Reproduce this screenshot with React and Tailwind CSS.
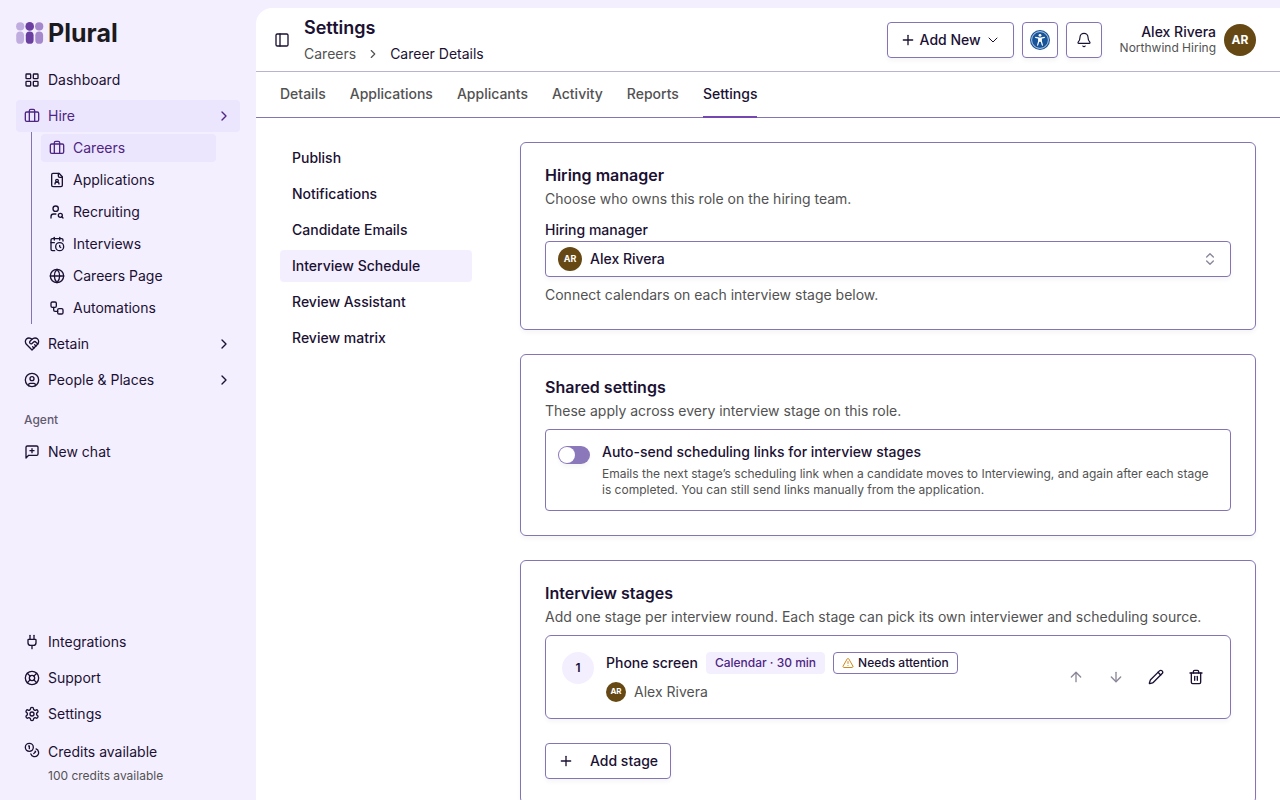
import { useState } from 'react';
import {
  ArrowDown,
  ArrowUp,
  Bell,
  Briefcase,
  CalendarClock,
  ChevronDown,
  ChevronRight,
  ChevronsUpDown,
  CircleUser,
  Coins,
  Globe,
  LayoutGrid,
  LifeBuoy,
  PanelLeft,
  Pencil,
  Plug,
  Plus,
  Trash2,
  TriangleAlert,
  UserSearch,
  Workflow,
} from 'lucide-react';

function StrokeIcon({ size = 16, children }) {
  return (
    <svg
      width={size}
      height={size}
      viewBox="0 0 24 24"
      fill="none"
      stroke="currentColor"
      strokeWidth="2"
      strokeLinecap="round"
      strokeLinejoin="round"
      aria-hidden="true"
    >
      {children}
    </svg>
  );
}

function FileUserIcon({ size }) {
  return (
    <StrokeIcon size={size}>
      <path d="M14 2v4a2 2 0 0 0 2 2h4" />
      <path d="M15 18a3 3 0 1 0-6 0" />
      <path d="M15 2H6a2 2 0 0 0-2 2v16a2 2 0 0 0 2 2h12a2 2 0 0 0 2-2V7z" />
      <circle cx="12" cy="13" r="2" />
    </StrokeIcon>
  );
}

function HeartHandshakeIcon({ size }) {
  return (
    <StrokeIcon size={size}>
      <path d="M19 14c1.49-1.46 3-3.21 3-5.5A5.5 5.5 0 0 0 16.5 3c-1.76 0-3 .5-4.5 2-1.5-1.5-2.74-2-4.5-2A5.5 5.5 0 0 0 2 8.5c0 2.3 1.5 4.05 3 5.5l7 7Z" />
      <path d="M12 5 9.04 7.96a2.17 2.17 0 0 0 0 3.08c.82.82 2.13.85 3 .07l2.07-1.9a2.82 2.82 0 0 1 3.79 0l2.96 2.66" />
      <path d="m18 15-2-2" />
      <path d="m15 18-2-2" />
    </StrokeIcon>
  );
}

function NewChatIcon({ size }) {
  return (
    <StrokeIcon size={size}>
      <path d="M21 15a2 2 0 0 1-2 2H7l-4 4V5a2 2 0 0 1 2-2h14a2 2 0 0 1 2 2z" />
      <path d="M12 7v6" />
      <path d="M9 10h6" />
    </StrokeIcon>
  );
}

function GearIcon({ size }) {
  return (
    <StrokeIcon size={size}>
      <path d="M12.22 2h-.44a2 2 0 0 0-2 2v.18a2 2 0 0 1-1 1.73l-.43.25a2 2 0 0 1-2 0l-.15-.08a2 2 0 0 0-2.73.73l-.22.38a2 2 0 0 0 .73 2.73l.15.1a2 2 0 0 1 1 1.72v.51a2 2 0 0 1-1 1.74l-.15.09a2 2 0 0 0-.73 2.73l.22.38a2 2 0 0 0 2.73.73l.15-.08a2 2 0 0 1 2 0l.43.25a2 2 0 0 1 1 1.73V20a2 2 0 0 0 2 2h.44a2 2 0 0 0 2-2v-.18a2 2 0 0 1 1-1.73l.43-.25a2 2 0 0 1 2 0l.15.08a2 2 0 0 0 2.73-.73l.22-.39a2 2 0 0 0-.73-2.73l-.15-.08a2 2 0 0 1-1-1.74v-.5a2 2 0 0 1 1-1.74l.15-.09a2 2 0 0 0 .73-2.73l-.22-.38a2 2 0 0 0-2.73-.73l-.15.08a2 2 0 0 1-2 0l-.43-.25a2 2 0 0 1-1-1.73V4a2 2 0 0 0-2-2z" />
      <circle cx="12" cy="12" r="3" />
    </StrokeIcon>
  );
}

const hireLinks = [
  { label: 'Careers', icon: Briefcase, active: true },
  { label: 'Applications', icon: FileUserIcon },
  { label: 'Recruiting', icon: UserSearch },
  { label: 'Interviews', icon: CalendarClock },
  { label: 'Careers Page', icon: Globe },
  { label: 'Automations', icon: Workflow },
];

const tabs = ['Details', 'Applications', 'Applicants', 'Activity', 'Reports', 'Settings'];

const sections = [
  'Publish',
  'Notifications',
  'Candidate Emails',
  'Interview Schedule',
  'Review Assistant',
  'Review matrix',
];

function Logo() {
  return (
    <a href="#" className="flex h-[34px] items-center gap-1 text-[#1c1a1f]">
      <svg width="28" height="22" viewBox="0 0 28 22" aria-hidden="true">
        <g fill="#c0addf">
          <circle cx="4.2" cy="4.4" r="4.1" />
          <rect x="0.2" y="9.4" width="7.8" height="12.4" rx="3.9" />
        </g>
        <g fill="#6b3fa0">
          <circle cx="13.7" cy="4.4" r="4.3" />
          <rect x="9.8" y="9.4" width="7.8" height="12.4" rx="3.9" />
        </g>
        <g fill="#a488cb">
          <circle cx="23.2" cy="4.4" r="4.1" />
          <rect x="19.3" y="9.4" width="7.8" height="12.4" rx="3.9" />
        </g>
      </svg>
      <span className="text-[25px] leading-8 font-bold">Plural</span>
    </a>
  );
}

function NavItem({ icon: Icon, label, active, expandable }) {
  return (
    <a
      href="#"
      className={`flex h-8 items-center gap-2 rounded-sm px-2 text-sm ${active ? 'bg-[#ebe5fd] text-[#4f2683]' : ''}`}
    >
      <Icon size={16} />
      <span className="flex-1">{label}</span>
      {expandable && <ChevronRight size={16} />}
    </a>
  );
}

function Sidebar() {
  return (
    <aside className="flex w-64 shrink-0 flex-col p-4">
      <Logo />
      <nav className="mt-3.5 flex flex-col gap-1">
        <NavItem icon={LayoutGrid} label="Dashboard" />
        <div>
          <NavItem icon={Briefcase} label="Hire" active expandable />
          <ul className="mr-6 ml-[15px] border-l border-[#8574b4] pl-[9px]">
            {hireLinks.map(({ label, icon: Icon, active }) => (
              <li key={label} className="py-0.5">
                <a
                  href="#"
                  className={`flex h-7 items-center gap-2 rounded-sm px-2 text-sm ${active ? 'bg-[#ebe5fd] text-[#4f2683]' : ''}`}
                >
                  <Icon size={16} />
                  {label}
                </a>
              </li>
            ))}
          </ul>
        </div>
        <NavItem icon={HeartHandshakeIcon} label="Retain" expandable />
        <NavItem icon={CircleUser} label="People & Places" expandable />
      </nav>
      <p className="mt-2 px-2 text-xs leading-8 font-medium text-[#5f5a6e]">Agent</p>
      <NavItem icon={NewChatIcon} label="New chat" />

      <div className="mt-auto flex flex-col gap-1">
        <NavItem icon={Plug} label="Integrations" />
        <NavItem icon={LifeBuoy} label="Support" />
        <NavItem icon={GearIcon} label="Settings" />
        <a href="#" className="flex gap-2 px-2 pt-2">
          <Coins size={16} />
          <span className="flex flex-col gap-1.5">
            <span className="text-sm">Credits available</span>
            <span className="text-xs text-[#525252]">100 credits available</span>
          </span>
        </a>
      </div>
    </aside>
  );
}

function AccessibilityIcon() {
  return (
    <svg width="20" height="20" viewBox="0 0 20 20" aria-hidden="true">
      <circle cx="10" cy="10" r="10" fill="#17549a" />
      <circle cx="10" cy="10" r="8.4" fill="none" stroke="#fff" strokeWidth="0.7" />
      <circle cx="10" cy="5.3" r="1.4" fill="#fff" />
      <path
        d="M5.6 7.4 L8.8 8.2 V11 L7.6 15.2 M14.4 7.4 L11.2 8.2 V11 L12.4 15.2"
        fill="none"
        stroke="#fff"
        strokeWidth="1.2"
        strokeLinecap="round"
        strokeLinejoin="round"
      />
      <path d="M8.4 7.6h3.2v4.2H8.4z" fill="#fff" />
    </svg>
  );
}

function Header() {
  return (
    <header className="flex h-16 shrink-0 items-center border-b border-[#b9b3cf] pr-6 pl-4">
      <button type="button" aria-label="Toggle sidebar" className="py-1 pr-1 pl-0.5">
        <PanelLeft size={16} />
      </button>
      <div className="ml-2.5 flex flex-1 flex-col gap-1">
        <h1 className="text-lg leading-6 font-semibold">Settings</h1>
        <nav aria-label="Breadcrumb" className="flex items-center gap-2.5 text-sm">
          <a href="#" className="text-[#525252]">Careers</a>
          <ChevronRight size={14} className="text-[#525252]" />
          <span>Career Details</span>
        </nav>
      </div>
      <div className="flex items-center gap-2">
        <button
          type="button"
          className="flex h-9 items-center gap-1 rounded-sm border border-[#8574b4] px-3 text-sm font-medium shadow-[0_3px_4px_rgba(0,0,0,0.04)]"
        >
          <Plus size={16} />
          Add New
          <ChevronDown size={16} strokeWidth={1.5} />
        </button>
        <button
          type="button"
          aria-label="Accessibility"
          className="flex size-9 items-center justify-center rounded-sm border border-[#8574b4] shadow-[0_3px_4px_rgba(0,0,0,0.04)]"
        >
          <AccessibilityIcon />
        </button>
        <button
          type="button"
          aria-label="Notifications"
          className="flex size-9 items-center justify-center rounded-sm border border-[#8574b4] shadow-[0_3px_4px_rgba(0,0,0,0.04)]"
        >
          <Bell size={16} strokeWidth={1.75} />
        </button>
        <div className="ml-2.5 text-right">
          <p className="text-sm leading-4 font-medium">Alex Rivera</p>
          <p className="text-xs leading-4 text-[#525252]">Northwind Hiring</p>
        </div>
        <Avatar className="size-8 text-xs" />
      </div>
    </header>
  );
}

function Avatar({ className }) {
  return (
    <span
      className={`flex shrink-0 items-center justify-center rounded-full bg-[#664814] font-bold text-white ${className}`}
    >
      AR
    </span>
  );
}

function Card({ title, description, children }) {
  return (
    <section className="rounded-md border border-[#8574b4] p-6 shadow-[0_3px_4px_rgba(0,0,0,0.04)]">
      <h2 className="text-base leading-4 font-semibold">{title}</h2>
      <p className="mt-1.5 text-sm text-[#525252]">{description}</p>
      {children}
    </section>
  );
}

function IconButton({ icon: Icon, label, disabled }) {
  return (
    <button
      type="button"
      aria-label={label}
      disabled={disabled}
      className="flex size-9 items-center justify-center disabled:opacity-50"
    >
      <Icon size={16} />
    </button>
  );
}

function App() {
  const [autoSend, setAutoSend] = useState(false);

  return (
    <div className="flex h-screen overflow-hidden bg-[#f4efff] font-[Inter,sans-serif] text-[#1b1133]">
      <Sidebar />
      <div className="mt-2 flex min-w-0 flex-1 flex-col rounded-tl-2xl bg-white">
        <Header />
        <nav className="flex shrink-0 gap-6 border-b border-[#8574b4] px-6 text-sm font-medium">
          {tabs.map((tab) => (
            <a
              key={tab}
              href="#"
              className={`-mb-px border-b-2 py-3 ${tab === 'Settings' ? 'border-[#7448b0]' : 'border-transparent text-[#525252]'}`}
            >
              {tab}
            </a>
          ))}
        </nav>

        <div className="flex flex-1 items-start gap-12 overflow-y-auto p-6 [scrollbar-width:none]">
          <nav className="flex w-48 shrink-0 flex-col gap-1 text-sm font-medium">
            {sections.map((section) => (
              <a
                key={section}
                href="#"
                className={`rounded-sm px-3 py-1.5 ${section === 'Interview Schedule' ? 'bg-[#f4efff]' : ''}`}
              >
                {section}
              </a>
            ))}
          </nav>

          <main className="flex min-w-0 flex-1 flex-col gap-6">
            <Card title="Hiring manager" description="Choose who owns this role on the hiring team.">
              <label htmlFor="manager" className="mt-3 mb-0.5 block text-sm leading-[18px] font-medium">
                Hiring manager
              </label>
              <div className="relative rounded-sm border border-[#8574b4] shadow-[0_3px_4px_rgba(0,0,0,0.04)]">
                <select
                  id="manager"
                  className="block h-[34px] w-full appearance-none pr-10 pl-11 text-sm font-medium"
                >
                  <option>Alex Rivera</option>
                </select>
                <Avatar className="pointer-events-none absolute top-[5px] left-3 size-6 text-[9px]" />
                <ChevronsUpDown size={16} className="pointer-events-none absolute top-[9px] right-3 opacity-50" />
              </div>
              <p className="mt-2 text-sm text-[#525252]">Connect calendars on each interview stage below.</p>
            </Card>

            <Card title="Shared settings" description="These apply across every interview stage on this role.">
              <div className="mt-2 flex gap-3 rounded-sm border border-[#8574b4] p-3">
                <input
                  id="auto-send"
                  type="checkbox"
                  role="switch"
                  checked={autoSend}
                  onChange={(e) => setAutoSend(e.target.checked)}
                  className="mt-1 flex h-[18px] w-8 shrink-0 appearance-none items-center rounded-full bg-[#8b78ba] p-px shadow-[0_3px_4px_rgba(0,0,0,0.04)] before:size-4 before:rounded-full before:bg-white checked:justify-end checked:bg-[#6b3fa0]"
                />
                <div>
                  <label htmlFor="auto-send" className="block text-sm font-medium">
                    Auto-send scheduling links for interview stages
                  </label>
                  <p className="mt-1 text-xs text-[#525252]">
                    Emails the next stage’s scheduling link when a candidate moves to Interviewing, and again after each
                    stage is completed. You can still send links manually from the application.
                  </p>
                </div>
              </div>
            </Card>

            <Card
              title="Interview stages"
              description="Add one stage per interview round. Each stage can pick its own interviewer and scheduling source."
            >
              <div className="mt-2 flex items-center gap-3 rounded-md border border-[#8574b4] p-4 shadow-[0_3px_4px_rgba(0,0,0,0.04)]">
                <span className="flex size-8 items-center justify-center self-start rounded-full bg-[#f4efff] text-xs font-semibold">
                  1
                </span>
                <div className="flex flex-1 flex-col gap-2">
                  <div className="flex items-center gap-2">
                    <h3 className="text-sm font-medium">Phone screen</h3>
                    <span className="rounded-sm border border-[#f4efff] bg-[#f4efff] px-2 py-0.5 text-xs font-medium text-[#4f2683]">
                      Calendar · 30 min
                    </span>
                    <span className="flex items-center gap-1 rounded-sm border border-[#8574b4] px-2 py-0.5 text-xs font-medium">
                      <TriangleAlert size={12} className="text-[#d08a1d]" />
                      Needs attention
                    </span>
                  </div>
                  <div className="flex items-center gap-2 text-sm text-[#525252]">
                    <Avatar className="size-5 text-[8px]" />
                    Alex Rivera
                  </div>
                </div>
                <div className="flex gap-1">
                  <IconButton icon={ArrowUp} label="Move up" disabled />
                  <IconButton icon={ArrowDown} label="Move down" disabled />
                  <IconButton icon={Pencil} label="Edit stage" />
                  <IconButton icon={Trash2} label="Delete stage" />
                </div>
              </div>
              <button
                type="button"
                className="mt-6 flex h-9 items-center gap-4 rounded-sm border border-[#8574b4] px-3 text-sm font-medium shadow-[0_3px_4px_rgba(0,0,0,0.04)]"
              >
                <Plus size={16} />
                Add stage
              </button>
            </Card>
          </main>
        </div>
      </div>
    </div>
  );
}

export default App;
